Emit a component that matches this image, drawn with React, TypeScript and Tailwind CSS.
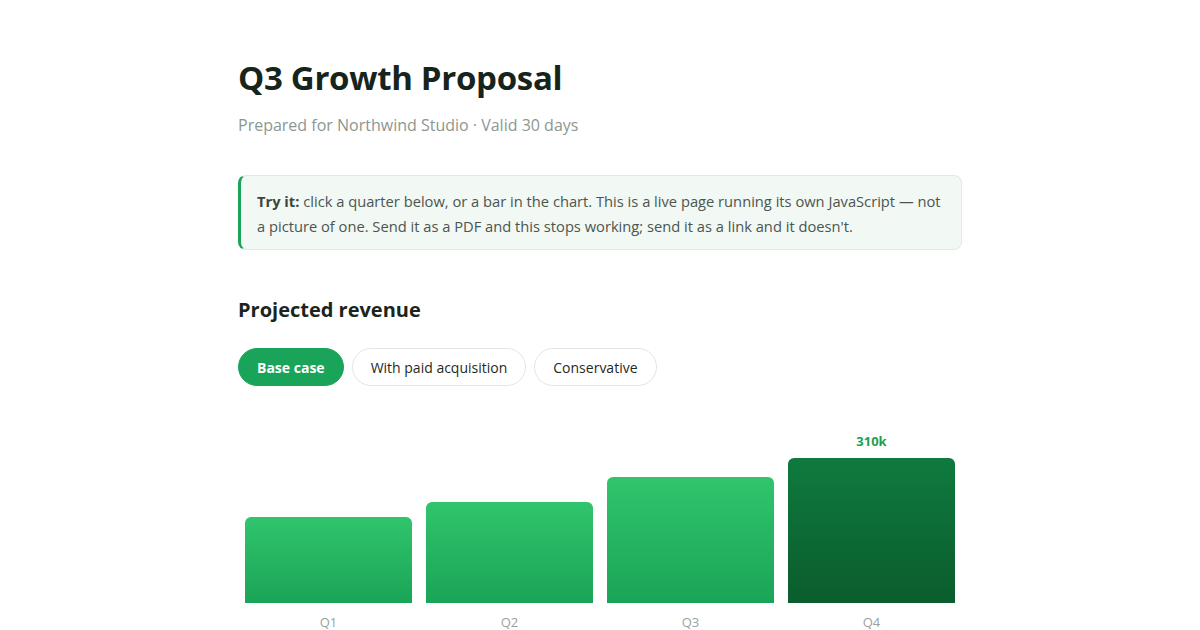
import React from 'react';

const scenarios = ['Base case', 'With paid acquisition', 'Conservative'];

const quarters = [
  { label: 'Q1', value: '184k', height: 86 },
  { label: 'Q2', value: '216k', height: 101 },
  { label: 'Q3', value: '269k', height: 126 },
  { label: 'Q4', value: '310k', height: 145 },
];

const App: React.FC = () => {
  const [scenario, setScenario] = React.useState(0);
  const [selected, setSelected] = React.useState(3);

  return (
    <div className="min-h-screen bg-white font-['Open_Sans',sans-serif] text-[#1a2520]">
      <div className="w-[724px] mx-auto pt-[59px]">
        <h1 className="text-[33px] leading-[38px] font-bold text-[#16241c] tracking-[-0.3px]">Q3 Growth Proposal</h1>
        <p className="mt-[16px] text-[16px] leading-[24px] text-[#8c9791]">
          Prepared for Northwind Studio · Valid 30 days
        </p>

        <div className="mt-[38px] rounded-lg border border-[#dcebe1] border-l-[3px] border-l-[#1aa459] bg-[#f2f8f4] pl-4 pr-4 pt-[13px] pb-[10px] text-[14.7px] leading-[25px] text-[#4a5650]">
          <strong className="font-bold text-[#3b4640]">Try it:</strong> click a quarter below, or a bar in the chart. This is a live page running its own JavaScript — not a picture of one. Send it as a PDF and this stops working; send it as a link and it doesn't.
        </div>

        <h2 className="mt-[46px] text-[20px] leading-[28px] font-bold text-[#1a2520]">Projected revenue</h2>

        <div className="mt-[24px] flex gap-2">
          {scenarios.map((s, i) => (
            <button
              key={s}
              onClick={() => setScenario(i)}
              className={`h-[38px] px-[18px] rounded-full text-[14px] border ${
                scenario === i
                  ? 'bg-[#1aa459] border-[#1aa459] text-white font-bold'
                  : 'bg-white border-[#e1e7e3] text-[#1f2a24]'
              }`}
            >
              {s}
            </button>
          ))}
        </div>

        <div className="mt-[17px] flex h-[200px] items-end">
          {quarters.map((q, i) => (
            <div
              key={q.label}
              onClick={() => setSelected(i)}
              className="flex-1 px-[7px] flex flex-col items-center justify-end h-full cursor-pointer"
            >
              {selected === i && (
                <div className="mb-[8px] text-[13px] leading-[18px] font-bold text-[#1c9e51]">{q.value}</div>
              )}
              <div
                className={`w-full rounded-t-[6px] ${
                  selected === i
                    ? 'bg-gradient-to-b from-[#0f7a3e] to-[#0b5d2d]'
                    : 'bg-gradient-to-b from-[#30c56c] to-[#1aa457]'
                }`}
                style={{ height: q.height }}
              />
            </div>
          ))}
        </div>
        <div className="flex mt-[10px]">
          {quarters.map((q) => (
            <div key={q.label} className="flex-1 text-center text-[13px] leading-[18px] text-[#9aa29e]">
              {q.label}
            </div>
          ))}
        </div>
      </div>
    </div>
  );
};

export default App;
